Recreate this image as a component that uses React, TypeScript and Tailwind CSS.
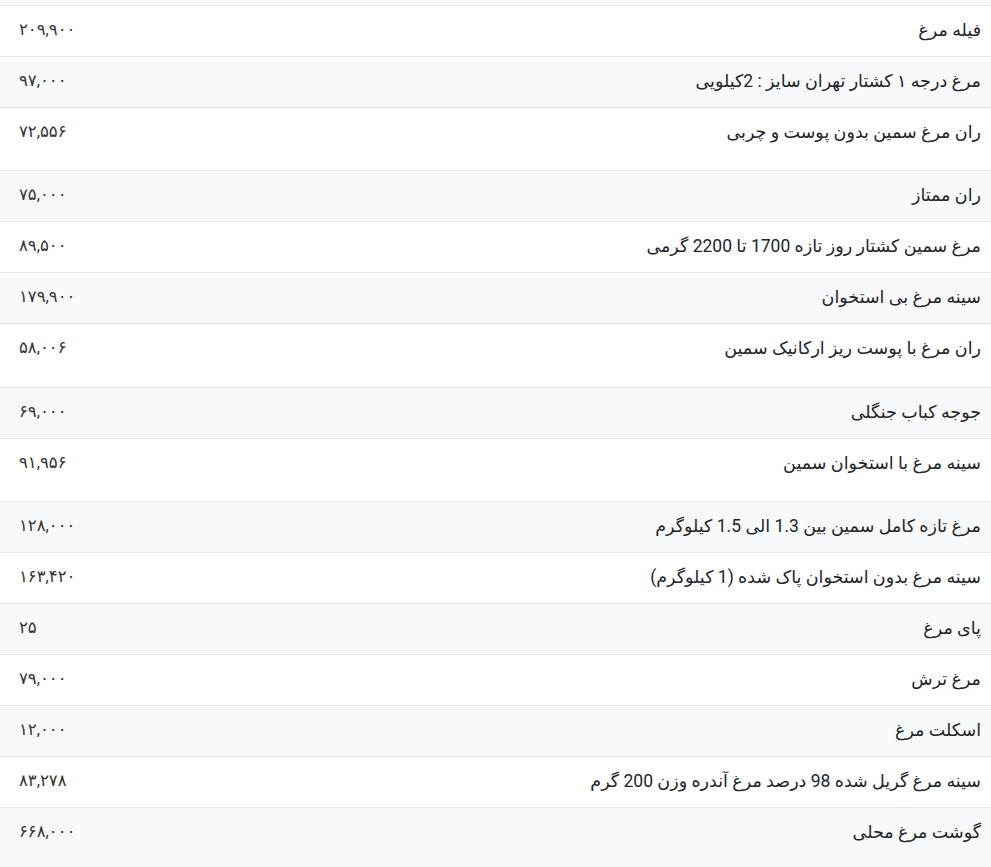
import React from "react";

const rows: { name: string; price: string; tall?: boolean }[] = [
  { name: "فیله مرغ", price: "۲۰۹,۹۰۰" },
  { name: "مرغ درجه ۱ کشتار تهران سایز : 2کیلویی", price: "۹۷,۰۰۰" },
  { name: "ران مرغ سمین بدون پوست و چربی", price: "۷۲,۵۵۶", tall: true },
  { name: "ران ممتاز", price: "۷۵,۰۰۰" },
  { name: "مرغ سمین کشتار روز تازه 1700 تا 2200 گرمی", price: "۸۹,۵۰۰" },
  { name: "سینه مرغ بی استخوان", price: "۱۷۹,۹۰۰" },
  { name: "ران مرغ با پوست ریز ارکانیک سمین", price: "۵۸,۰۰۶", tall: true },
  { name: "جوجه کباب جنگلی", price: "۶۹,۰۰۰" },
  { name: "سینه مرغ  با استخوان سمین", price: "۹۱,۹۵۶", tall: true },
  { name: "مرغ تازه کامل سمین بین 1.3 الی 1.5 کیلوگرم", price: "۱۲۸,۰۰۰" },
  { name: "سینه مرغ بدون استخوان پاک شده (1 کیلوگرم)", price: "۱۶۳,۴۲۰" },
  { name: "پای مرغ", price: "۲۵" },
  { name: "مرغ ترش", price: "۷۹,۰۰۰" },
  { name: "اسکلت مرغ", price: "۱۲,۰۰۰" },
  { name: "سینه مرغ گریل شده 98 درصد مرغ آندره وزن 200 گرم", price: "۸۳,۲۷۸" },
  { name: "گوشت مرغ محلی", price: "۶۶۸,۰۰۰", tall: true },
];

export default function App() {
  return (
    <div
      dir="rtl"
      className="w-[991px] h-[867px] overflow-hidden bg-white text-[#212529]"
      style={{ fontFamily: "Roboto, 'DejaVu Sans', sans-serif" }}
    >
      <div className="h-[6px] bg-[#f8f9fa] border-b border-[#e6e8eb]" />
      {rows.map((r, i) => (
        <div
          key={i}
          className={`flex justify-between border-b border-[#e6e8eb] ${
            i % 2 === 0 ? "bg-white" : "bg-[#f8f9fa]"
          } ${r.tall ? "h-[63.33px]" : "h-[51px]"}`}
        >
          <div className="pr-[10px] pt-[11px] text-[17.5px] leading-[26px]">{r.name}</div>
          <div className="pl-[19px] pt-[11px] text-[16.5px] leading-[26px] text-[#333]">{r.price}</div>
        </div>
      ))}
    </div>
  );
}
